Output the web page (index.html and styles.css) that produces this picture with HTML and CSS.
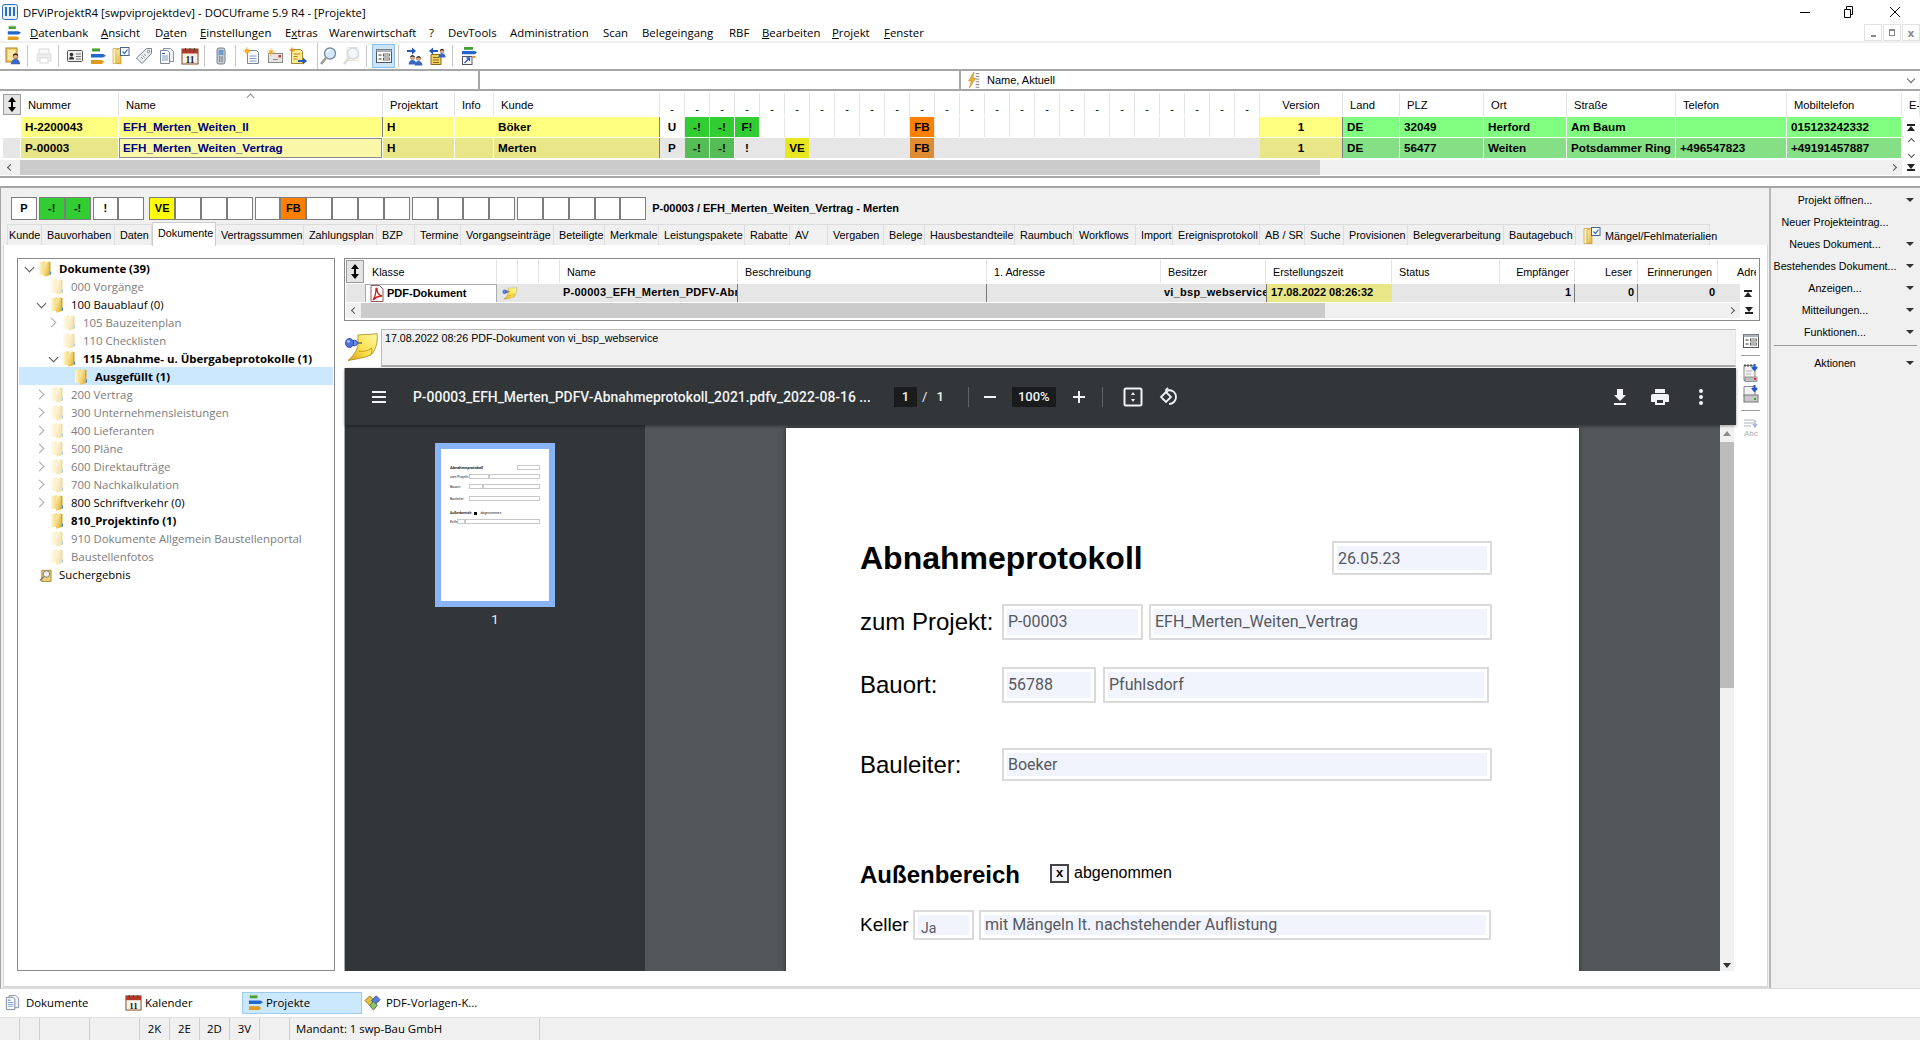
FILE: index.html
```html
<!DOCTYPE html>
<html lang="de">
<head>
<meta charset="utf-8">
<title>DFViProjektR4</title>
<link rel="stylesheet" href="styles.css">
</head>
<body>
<svg class="sprite" xmlns="http://www.w3.org/2000/svg">
  <defs>
    <linearGradient id="gold" x1="0" y1="0" x2="1" y2="1"><stop offset="0" stop-color="#fff4b8"/><stop offset="1" stop-color="#e2ad2c"/></linearGradient>
    <linearGradient id="pale" x1="0" y1="0" x2="1" y2="0"><stop offset="0" stop-color="#fff8d6"/><stop offset="1" stop-color="#f4d56c"/></linearGradient>
    <linearGradient id="sticky" x1="1" y1="0" x2="0" y2="1"><stop offset="0" stop-color="#fff7a6"/><stop offset=".55" stop-color="#fbe04e"/><stop offset="1" stop-color="#d9a21c"/></linearGradient>
    <symbol id="folder" viewBox="0 0 13 17"><path d="M0 2.500 6 1v14H0z" fill="url(#pale)"/><path d="M5 3.500 10 1v14.500L5 16.800z" fill="url(#gold)"/><path d="M10 2h1.500v13H10z" fill="#d8a52c"/><path d="M11 11.500h1v3h-1z" fill="#3b8fd8"/></symbol>
    <symbol id="stack" viewBox="0 0 18 18"><path d="M3 1h8v3.500H3z" fill="#4a9a3a"/><path d="M3 1h8v1H3z" fill="#8fd070"/><path d="M2 7h12l3 1.800-3 1.800H2z" fill="#2266cc"/><path d="M2 13h11l2 1.800-2 2.200H2z" fill="#e09a20"/></symbol>
    <symbol id="doc" viewBox="0 0 18 18"><path d="M5.500 1.500h7l3 3v10h-10z" fill="#eef1f5" stroke="#8a93a0"/><path d="M2.500 3.500h7l2 2v11h-9z" fill="#fbfcfe" stroke="#7d8794"/><path d="M4 6.500h3" stroke="#3a66c0"/><path d="M4 9h6M4 11h6M4 13h6" stroke="#7f9cc8"/></symbol>
    <symbol id="cal" viewBox="0 0 18 18"><rect x="1" y="2" width="16" height="15" fill="#f8f2e4" stroke="#7b4a26"/><rect x="1" y="2" width="16" height="4.500" fill="#b23a2a"/><path d="M4.500 1v3M9 1v3M13.500 1v3" stroke="#444"/><text x="9" y="15.500" text-anchor="middle" font-family="Liberation Serif" font-weight="bold" font-size="9.500" fill="#1a1a1a">11</text></symbol>
    <symbol id="mag" viewBox="0 0 18 20"><circle cx="11" cy="7.500" r="5.500" fill="#d6e8fb" stroke="#7a8da2" stroke-width="1.400"/><path d="M8 6a3.500 3.500 0 0 1 4-2" fill="none" stroke="#fff" stroke-width="1.200"/><path d="M7 12 2 18" stroke="#9a9a8e" stroke-width="2.600"/></symbol>
    <symbol id="person" viewBox="0 0 18 20"><circle cx="9" cy="7.500" r="3.500" fill="#e5b08a" stroke="#4a2e18" stroke-width=".6"/><path d="M2.500 19c0-5 3-7.500 6.500-7.500s6.500 2.500 6.500 7.500z" fill="#3a66c0"/><path d="M5.500 7c-.5-4.500 7.500-4.500 7 0-2-1.500-5-1.500-7 0z" fill="#2e1c0e"/></symbol>
    <symbol id="note" viewBox="0 0 36 32"><path d="M14 5C20 4 28 5 33 3.500 34 12 32 20 27 25 20 28 12 29 4 30.500 9 26 13 21 14 15z" fill="url(#sticky)" stroke="#a8881c" stroke-width=".8"/><path d="M27 25c1-3 1-5 .5-7-3 3-9 4-13 3" fill="none" stroke="#c89a18"/><path d="M13 13h5" stroke="#6a6a6a" stroke-width="1.500"/><ellipse cx="10.500" cy="13" rx="3" ry="2.800" fill="#6f8df0" stroke="#23408f" stroke-width=".8"/><ellipse cx="5.500" cy="13" rx="4" ry="4.500" fill="#4e6fe0" stroke="#23408f" stroke-width=".8"/><ellipse cx="4.500" cy="11.500" rx="1.500" ry="1.300" fill="#b8c8fa"/></symbol>
    <symbol id="pdf" viewBox="0 0 14 17"><path d="M1 .5h8.500L13 4v12.500H1z" fill="#fff" stroke="#8c5b5b"/><path d="M3 15c2-3 3-7 3-11 0-1 1-1 1 0 0 3 2 6 5 7-3 0-6 1-9 4z" fill="none" stroke="#c8201c" stroke-width="1.300"/></symbol>
    <symbol id="listform" viewBox="0 0 18 18"><rect x="1.500" y="2.500" width="15" height="13" fill="#fff" stroke="#555"/><path d="M1.500 2.500h15V5h-15z" fill="#aab2bc"/><path d="M3.500 8h3M3.500 12h3" stroke="#333"/><rect x="8.500" y="7" width="6" height="2" fill="#fff" stroke="#333" stroke-width=".7"/><rect x="8.500" y="11" width="6" height="2" fill="#fff" stroke="#333" stroke-width=".7"/></symbol>
    <symbol id="imp" viewBox="0 0 18 20"><path d="M2 2.500h11v15H2z" fill="#f2f2f2" stroke="#8a8a8a"/><path d="M2 2.500h2M5 2.500h2M8 2.500h2" stroke="#555" stroke-width="2"/><path d="M4 8h6M4 11h5" stroke="#b0b0b0"/><path d="M12.500 1v5M10 4l2.500 3L15 4" fill="none" stroke="#2358c8" stroke-width="2"/><rect x="3" y="14" width="12" height="4.500" fill="#bfbfbf" stroke="#777" stroke-width=".7"/><rect x="12" y="15" width="2" height="2" fill="#d33"/></symbol>
    <symbol id="fchk" viewBox="0 0 18 18"><path d="M1 1.500h6v15H1z" fill="url(#pale)" stroke="#b8912a" stroke-width=".6"/><path d="M4 3l5-2v16l-5-1z" fill="url(#gold)" stroke="#b8912a" stroke-width=".6"/><rect x="8.500" y=".5" width="8.500" height="8" fill="#fff" stroke="#47678f"/><path d="m10.500 4.500 2 2 3-4" fill="none" stroke="#2a6fc0" stroke-width="1.200"/></symbol>
  </defs>
</svg>

<div class="app">
  <header class="titlebar">
    <svg class="appicon" viewBox="0 0 16 16"><rect x=".5" y=".5" width="15" height="15" rx="2" fill="#e8f2fc" stroke="#2a6fc0"/><path d="M4 3v9M8 3v9M12 3v9" stroke="#2a6fc0" stroke-width="2"/></svg>
    <span class="title">DFViProjektR4 [swpviprojektdev] - DOCUframe 5.9 R4 - [Projekte]</span>
    <div class="winctl">
      <svg viewBox="0 0 44 16"><path d="M15 8.500h10" stroke="#000"/></svg>
      <svg viewBox="0 0 44 16"><path d="M15.500 5.500h6v8h-6zM17.500 5.500v-3h6v8h-2" fill="none" stroke="#000"/></svg>
      <svg viewBox="0 0 44 16"><path d="M17 3l10 10M27 3 17 13" stroke="#000"/></svg>
    </div>
  </header>

  <nav class="menubar">
    <svg class="menuicon"><use href="#stack"/></svg>
    <span class="m1"><u>D</u>atenbank</span><span class="m2"><u>A</u>nsicht</span><span class="m3">D<u>a</u>ten</span><span class="m4"><u>E</u>instellungen</span><span class="m5">E<u>x</u>tras</span><span class="m6">Warenwirtschaft</span><span class="m7">?</span><span class="m8">DevTools</span><span class="m9">Administration</span><span class="m10">Scan</span><span class="m11">Belegeingang</span><span class="m12">RBF</span><span class="m13"><u>B</u>earbeiten</span><span class="m14"><u>P</u>rojekt</span><span class="m15"><u>F</u>enster</span>
    <div class="mdictl">
      <i><b class="mdi-min"></b></i><i><b class="mdi-res"></b></i><i class="mdi-x">x</i>
    </div>
  </nav>

  <div class="toolbar">
    <span class="tb"><svg viewBox="0 0 18 20"><rect x="2" y="2" width="11" height="14" fill="#f3cf6a" stroke="#a8842a"/><rect x="4" y="4" width="7" height="10" fill="#fbe9a8"/><use href="#person" x="5" y="5" width="13" height="14"/></svg></span><i class="sep"></i>
    <span class="tb dim"><svg viewBox="0 0 18 18"><rect x="4" y="2" width="10" height="6" fill="#eee" stroke="#999"/><rect x="2" y="7" width="14" height="7" fill="#ccc" stroke="#999"/><rect x="5" y="11" width="8" height="5" fill="#fff" stroke="#999"/></svg></span><i class="sep"></i>
    <span class="tb"><svg viewBox="0 0 18 18"><rect x="1.500" y="3.500" width="15" height="11" rx="1" fill="#eee" stroke="#555"/><circle cx="5.500" cy="7.500" r="1.800" fill="#333"/><path d="M3 12.500c0-2 1-3 2.500-3s2.500 1 2.500 3z" fill="#333"/><path d="M10 7h5M10 9.500h5M10 12h5" stroke="#777"/></svg></span>
    <span class="tb"><svg><use href="#stack"/></svg></span>
    <span class="tb"><svg><use href="#fchk"/></svg></span>
    <span class="tb"><svg viewBox="0 0 18 18"><path d="M11.500 1.500h5v5L7 16.500 1.500 11z" fill="#eceff3" stroke="#78818c"/><circle cx="13.500" cy="4.500" r="1.200" fill="#fff" stroke="#78818c"/><path d="M6 10l2 2M7.500 8.500l2 2M9 7l2 2" stroke="#8a93a0"/></svg></span>
    <span class="tb"><svg><use href="#doc"/></svg></span>
    <span class="tb"><svg><use href="#cal"/></svg></span><i class="sep"></i>
    <span class="tb"><svg viewBox="0 0 18 18"><rect x="5" y="1" width="8" height="16" rx="2" fill="#c6ccd4" stroke="#7a8491"/><rect x="6.500" y="3" width="5" height="5" fill="#6f9ad0"/><path d="M7 10h4M7 12h4M7 14h4" stroke="#555" stroke-dasharray="1 .6"/></svg></span><i class="sep"></i>
    <span class="tb"><svg viewBox="0 0 18 18"><path d="M4.500 3.500h9l2 2v11h-11z" fill="#fafbfd" stroke="#7d8794"/><path d="M6.500 9h7M6.500 11.500h7M6.500 14h7" stroke="#7f9cc8"/><circle cx="4" cy="4" r="2.200" fill="#f0b030"/><path d="M4 0v8M0 4h8M1.500 1.500l5 5M6.500 1.500l-5 5" stroke="#f0b030" stroke-width=".7"/></svg></span>
    <span class="tb"><svg viewBox="0 0 18 18"><rect x="2.500" y="6.500" width="14" height="9" fill="#e6e6de" stroke="#8a8a8a"/><path d="M7 12.500h5" stroke="#888"/><rect x="12.500" y="8" width="2.500" height="2.500" fill="#cc3a2a"/><circle cx="5" cy="5" r="1.800" fill="#f0b030"/><path d="M5 1v8M1 5h8M2.500 2.500l5 5M7.500 2.500l-5 5" stroke="#f0b030" stroke-width=".7"/></svg></span>
    <span class="tb"><svg viewBox="0 0 18 18"><path d="M2.500 2.500h9l2 2v12h-11z" fill="#ffe98c" stroke="#a88a2a"/><path d="M4.500 7h7M4.500 9.500h4M4.500 12h4" stroke="#a88a2a"/><circle cx="3" cy="3" r="1.800" fill="#e89020"/><path d="M3 0v6M0 3h6" stroke="#e89020" stroke-width=".7"/><path d="M9 13h5v-2.500l4 3.500-4 3.500V15H9z" fill="#2358c8"/></svg></span><i class="sep far"></i>
    <span class="tb"><svg><use href="#mag"/></svg></span>
    <span class="tb dim"><svg viewBox="0 0 18 20"><path d="M5 1.500h11v13H5z" fill="#f8f0d8" stroke="#c8b88a"/><use href="#mag" width="18" height="20"/></svg></span><i class="sep near"></i>
    <span class="tb active"><svg><use href="#listform"/></svg></span><i class="sep"></i>
    <span class="tb"><svg viewBox="0 0 18 20"><path d="M1 4h5V1.500L10 5 6 8.500V6H1z" fill="#2358c8"/><use href="#person" x="1" y="7" width="11" height="12"/><use href="#person" x="7" y="8" width="11" height="12"/></svg></span>
    <span class="tb"><svg viewBox="0 0 18 20"><path d="M2 8.500h10v10H2z" fill="#f0d060" stroke="#8a6a1a"/><path d="M4 11.500h6M4 14h6M4 16.500h6" stroke="#8a6a1a"/><path d="M9 4H4V1.500L0 5l4 3.500V6h5z" fill="#2358c8"/><use href="#person" x="8" y="1" width="10" height="11"/></svg></span><i class="sep"></i>
    <span class="tb"><svg viewBox="0 0 18 20"><path d="M4 1h9v2.800H4z" fill="#4a9a3a"/><path d="M2 5h13l2 1.600-2 1.600H2z" fill="#2266cc"/><rect x="2.500" y="10.500" width="9.500" height="8" fill="#fff" stroke="#556"/><path d="M4.500 17l5-5M6.500 12h3v3" fill="none" stroke="#2358c8" stroke-width="1.300"/><path d="M12.500 10h3v2h-3z" fill="#e09a20"/></svg></span>
  </div>

  <div class="filter">
    <div class="f1"></div>
    <div class="f2"></div>
    <div class="f3">
      <svg viewBox="0 0 16 20"><path d="M9 1 3 11h3l-2 8 7-11H8z" fill="#e8b030" stroke="#a87818" stroke-width=".5"/><path d="M11 3h4M11 6h4M11 9h4M11 12h4M11 15h4M11 18h4" stroke="#777"/></svg>
      <span>Name, Aktuell</span>
      <b class="chev-down"></b>
    </div>
  </div>

  <section class="projects">
    <div class="pgrid">
      <div class="pbtn"><b class="updown"></b></div><div class="h">Nummer</div><div class="h sorted">Name</div><div class="h">Projektart</div><div class="h">Info</div><div class="h">Kunde</div>
      <div class="n">-</div><div class="n">-</div><div class="n">-</div><div class="n">-</div><div class="n">-</div><div class="n">-</div><div class="n">-</div><div class="n">-</div><div class="n">-</div><div class="n">-</div><div class="n">-</div><div class="n">-</div><div class="n">-</div><div class="n">-</div><div class="n">-</div><div class="n">-</div><div class="n">-</div><div class="n">-</div><div class="n">-</div><div class="n">-</div><div class="n">-</div><div class="n">-</div><div class="n">-</div><div class="n">-</div>
      <div class="h center">Version</div><div class="h">Land</div><div class="h">PLZ</div><div class="h">Ort</div><div class="h">Straße</div><div class="h">Telefon</div><div class="h">Mobiltelefon</div><div class="h">E-</div>

      <div class="c"></div><div class="c y1">H-2200043</div><div class="c y1 navy vl">EFH_Merten_Weiten_II</div><div class="c y1">H</div><div class="c y1"></div><div class="c y1 vl">Böker</div>
      <div class="s">U</div><div class="s g1">-!</div><div class="s g1">-!</div><div class="s g1">F!</div><div class="s"></div><div class="s"></div><div class="s"></div><div class="s"></div><div class="s"></div><div class="s"></div><div class="s or1">FB</div><div class="s"></div><div class="s"></div><div class="s"></div><div class="s"></div><div class="s"></div><div class="s"></div><div class="s"></div><div class="s"></div><div class="s"></div><div class="s"></div><div class="s"></div><div class="s"></div><div class="s"></div>
      <div class="c y1 center vl">1</div><div class="c lg1">DE</div><div class="c lg1">32049</div><div class="c lg1">Herford</div><div class="c lg1">Am Baum</div><div class="c lg1"></div><div class="c lg1">015123242332</div><div class="c vscroll"><b class="tobar top"></b></div>

      <div class="c gy"></div><div class="c y2">P-00003</div><div class="c y3 navy">EFH_Merten_Weiten_Vertrag</div><div class="c y2">H</div><div class="c y2"></div><div class="c y2 vl">Merten</div>
      <div class="s gy">P</div><div class="s g2">-!</div><div class="s g2">-!</div><div class="s gy">!</div><div class="s gy"></div><div class="s ve2">VE</div><div class="s gy"></div><div class="s gy"></div><div class="s gy"></div><div class="s gy"></div><div class="s or2">FB</div><div class="s gy"></div><div class="s gy"></div><div class="s gy"></div><div class="s gy"></div><div class="s gy"></div><div class="s gy"></div><div class="s gy"></div><div class="s gy"></div><div class="s gy"></div><div class="s gy"></div><div class="s gy"></div><div class="s gy"></div><div class="s gy"></div>
      <div class="c y2 center vl">1</div><div class="c lg2">DE</div><div class="c lg2">56477</div><div class="c lg2">Weiten</div><div class="c lg2">Potsdammer Ring</div><div class="c lg2">+496547823</div><div class="c lg2">+49191457887</div><div class="c vscroll updn"><b class="chev up"></b><b class="chev dn"></b></div>
    </div>
    <div class="hscroll main">
      <b class="chev lf"></b><div class="thumb"></div><b class="chev rt"></b><span class="endcell"><b class="tobar bot"></b></span>
    </div>
  </section>

  <section class="lower">
    <div class="workarea">
      <div class="statusrow">
        <div class="sg"><span>P</span></div>
        <div class="sg"><span class="bg-g">-!</span><span class="bg-g">-!</span></div>
        <div class="sg wide"><span>!</span><span></span></div>
        <div class="sg"><span class="bg-y">VE</span><span></span><span></span><span></span></div>
        <div class="sg"><span></span><span class="bg-o">FB</span><span></span><span></span><span></span><span></span></div>
        <div class="sg"><span></span><span></span><span></span><span></span></div>
        <div class="sg"><span></span><span></span><span></span><span></span><span></span></div>
        <strong>P-00003 / EFH_Merten_Weiten_Vertrag - Merten</strong>
      </div>

      <div class="tabs">
        <span>Kunde</span><span>Bauvorhaben</span><span>Daten</span><span class="on">Dokumente</span><span>Vertragssummen</span><span>Zahlungsplan</span><span>BZP</span><span>Termine</span><span>Vorgangseinträge</span><span>Beteiligte</span><span>Merkmale</span><span>Leistungspakete</span><span>Rabatte</span><span>AV</span><span>Vergaben</span><span>Belege</span><span>Hausbestandteile</span><span>Raumbuch</span><span>Workflows</span><span>Import</span><span>Ereignisprotokoll</span><span>AB / SR</span><span>Suche</span><span>Provisionen</span><span>Belegverarbeitung</span><span>Bautagebuch</span>
        <span class="withicon"><svg><use href="#fchk"/></svg>Mängel/Fehlmaterialien</span>
      </div>

      <div class="content">
        <aside class="tree">
          <div class="row"><b class="tw open"></b><svg class="fd"><use href="#folder"/></svg><span class="bold">Dokumente (39)</span></div>
          <div class="row l1 off"><b class="tw"></b><svg class="fd"><use href="#folder"/></svg><span>000 Vorgänge</span></div>
          <div class="row l1"><b class="tw open"></b><svg class="fd"><use href="#folder"/></svg><span>100 Bauablauf (0)</span></div>
          <div class="row l2 off"><b class="tw closed"></b><svg class="fd"><use href="#folder"/></svg><span>105 Bauzeitenplan</span></div>
          <div class="row l2 off"><b class="tw"></b><svg class="fd"><use href="#folder"/></svg><span>110 Checklisten</span></div>
          <div class="row l2"><b class="tw open"></b><svg class="fd"><use href="#folder"/></svg><span class="bold">115 Abnahme- u. Übergabeprotokolle (1)</span></div>
          <div class="row l3 sel"><b class="tw"></b><svg class="fd"><use href="#folder"/></svg><span class="bold">Ausgefüllt (1)</span></div>
          <div class="row l1 off"><b class="tw closed"></b><svg class="fd"><use href="#folder"/></svg><span>200 Vertrag</span></div>
          <div class="row l1 off"><b class="tw closed"></b><svg class="fd"><use href="#folder"/></svg><span>300 Unternehmensleistungen</span></div>
          <div class="row l1 off"><b class="tw closed"></b><svg class="fd"><use href="#folder"/></svg><span>400 Lieferanten</span></div>
          <div class="row l1 off"><b class="tw closed"></b><svg class="fd"><use href="#folder"/></svg><span>500 Pläne</span></div>
          <div class="row l1 off"><b class="tw closed"></b><svg class="fd"><use href="#folder"/></svg><span>600 Direktaufträge</span></div>
          <div class="row l1 off"><b class="tw closed"></b><svg class="fd"><use href="#folder"/></svg><span>700 Nachkalkulation</span></div>
          <div class="row l1"><b class="tw closed"></b><svg class="fd"><use href="#folder"/></svg><span>800 Schriftverkehr (0)</span></div>
          <div class="row l1"><b class="tw"></b><svg class="fd"><use href="#folder"/></svg><span class="bold">810_Projektinfo (1)</span></div>
          <div class="row l1 off"><b class="tw"></b><svg class="fd"><use href="#folder"/></svg><span>910 Dokumente Allgemein Baustellenportal</span></div>
          <div class="row l1 off"><b class="tw"></b><svg class="fd"><use href="#folder"/></svg><span>Baustellenfotos</span></div>
          <div class="row"><b class="tw"></b><svg class="fd search" viewBox="0 0 14 17"><path d="M3 4h10v12H3z" fill="#f0d078" stroke="#a88a2a"/><circle cx="8" cy="8" r="3.500" fill="#e8f0f8" stroke="#777"/><path d="M5 11 1 15" stroke="#777" stroke-width="1.500"/></svg><span>Suchergebnis</span></div>
        </aside>

        <div class="rightcol">
          <div class="doctable">
            <div class="dgrid">
              <div class="pbtn"><b class="updown"></b></div><div class="dh">Klasse</div><div class="dh"></div><div class="dh"></div><div class="dh"></div><div class="dh">Name</div><div class="dh">Beschreibung</div><div class="dh">1. Adresse</div><div class="dh">Besitzer</div><div class="dh">Erstellungszeit</div><div class="dh">Status</div><div class="dh right">Empfänger</div><div class="dh right">Leser</div><div class="dh right">Erinnerungen</div><div class="dh adre">Adre</div>
              <div class="d"></div><div class="d klasse"><svg class="pdficon"><use href="#pdf"/></svg>PDF-Dokument</div><div class="d"><svg class="pinmini"><use href="#note"/></svg></div><div class="d"></div><div class="d"></div><div class="d sepd clip">P-00003_EFH_Merten_PDFV-Abnahmeprotokoll</div><div class="d sepd"></div><div class="d"></div><div class="d clip">vi_bsp_webservice</div><div class="d ydate">17.08.2022 08:26:32</div><div class="d"></div><div class="d right sepd">1</div><div class="d right sepd">0</div><div class="d right">0</div><div class="d"></div><div class="d endw"><b class="tobar top"></b></div>
            </div>
            <div class="hscroll doc"><b class="chev lf"></b><div class="thumb"></div><b class="chev rt"></b><span class="endcell"><b class="tobar bot"></b></span></div>
          </div>

          <div class="docbody">
            <div class="docmain">
              <div class="noterow">
                <svg class="bignote"><use href="#note"/></svg>
                <div class="notebox">17.08.2022 08:26 PDF-Dokument von vi_bsp_webservice</div>
              </div>

              <div class="viewer">
                <div class="vbar">
                  <svg class="vi ham" viewBox="0 0 20 20"><path d="M3 5h14M3 10h14M3 15h14" stroke="#f1f3f4" stroke-width="2"/></svg>
                  <span class="vtitle">P-00003_EFH_Merten_PDFV-Abnahmeprotokoll_2021.pdfv_2022-08-16 ...</span>
                  <span class="pagebox">1</span><span class="slash">/</span><span class="pagetotal">1</span>
                  <i class="vsep first"></i>
                  <svg class="vi minus" viewBox="0 0 20 20"><path d="M4 10h12" stroke="#f1f3f4" stroke-width="2"/></svg>
                  <span class="zoombox">100%</span>
                  <svg class="vi plus" viewBox="0 0 20 20"><path d="M4 10h12M10 4v12" stroke="#f1f3f4" stroke-width="2"/></svg>
                  <i class="vsep second"></i>
                  <svg class="vi fit" viewBox="0 0 20 20"><rect x="1.500" y="1.500" width="17" height="17" rx="1.500" fill="none" stroke="#f1f3f4" stroke-width="2"/><path d="M10 5l2 3H8zM10 15l2-3H8z" fill="#f1f3f4"/></svg>
                  <svg class="vi rot" viewBox="0 0 20 20"><path d="M8 5 3 10l5 5 5-5z" fill="none" stroke="#f1f3f4" stroke-width="1.800"/><path d="M10 1l-2 2 2 2M10 3c5 0 8 3 8 7s-3 7-7 7" fill="none" stroke="#f1f3f4" stroke-width="1.800"/></svg>
                  <svg class="vi dl" viewBox="0 0 20 20"><path d="M7 2h6v6h3l-6 6-6-6h3zM4 16h12v2H4z" fill="#f1f3f4"/></svg>
                  <svg class="vi pr" viewBox="0 0 20 20"><path d="M5 2h10v4H5zM3 7h14a2 2 0 0 1 2 2v6h-4v3H5v-3H1V9a2 2 0 0 1 2-2zm4 6v3h6v-3z" fill="#f1f3f4"/></svg>
                  <svg class="vi more" viewBox="0 0 20 20"><circle cx="10" cy="4" r="2" fill="#f1f3f4"/><circle cx="10" cy="10" r="2" fill="#f1f3f4"/><circle cx="10" cy="16" r="2" fill="#f1f3f4"/></svg>
                </div>
                <div class="vbody">
                  <div class="thumbs">
                    <div class="thumbpage">
                      <div class="tp">
                        <div class="tp-h"><b>Abnahmeprotokoll</b><i></i></div>
                        <div class="tp-r"><em>zum Projekt:</em><i class="w-a"></i><i></i></div>
                        <div class="tp-r gap-b"><em>Bauort:</em><i class="w-b"></i><i></i></div>
                        <div class="tp-r gap-c"><em>Bauleiter:</em><i></i></div>
                        <div class="tp-a"><b>Außenbereich</b><u></u><em>abgenommen</em></div>
                        <div class="tp-r kel"><em>Keller</em><i class="w-c"></i><i></i></div>
                      </div>
                    </div>
                    <div class="thumbnum">1</div>
                  </div>
                  <div class="pagearea">
                    <div class="page">
                      <div class="p-row p-head"><h1>Abnahmeprotokoll</h1><div class="field date"><span>26.05.23</span></div></div>
                      <div class="p-row p-proj"><label>zum Projekt:</label><div class="field w141"><span>P-00003</span></div><div class="field grow"><span>EFH_Merten_Weiten_Vertrag</span></div></div>
                      <div class="p-row p-ort"><label>Bauort:</label><div class="field w94"><span>56788</span></div><div class="field grow"><span>Pfuhlsdorf</span></div></div>
                      <div class="p-row p-bl"><label>Bauleiter:</label><div class="field grow"><span>Boeker</span></div></div>
                      <div class="p-row p-aus"><h2>Außenbereich</h2><b class="check">x</b><span class="abg">abgenommen</span></div>
                      <div class="p-row p-kel"><label>Keller</label><div class="field w61"><span class="ja">Ja</span></div><div class="field grow"><span>mit Mängeln lt. nachstehender Auflistung</span></div></div>
                    </div>
                  </div>
                  <div class="vscrollbar"><b class="ar up"></b><div class="vthumb"></div><b class="ar dn"></b></div>
                </div>
              </div>
            </div>
            <div class="sidetools">
              <svg class="st"><use href="#listform"/></svg>
              <i class="stsep"></i>
              <svg class="st"><use href="#imp"/></svg>
              <svg class="st s2nd" viewBox="0 0 18 20"><path d="M2 2.500h11v10H2z" fill="#f2f2f2" stroke="#8a8a8a"/><path d="M12.500 1v5M10 4l2.500 3L15 4" fill="none" stroke="#2358c8" stroke-width="2"/><rect x="2" y="11" width="14" height="7" fill="#c8c8c8" stroke="#777"/><rect x="12" y="14" width="2" height="2" fill="#3a3"/></svg>
              <i class="stsep low"></i>
              <svg class="st faded" viewBox="0 0 18 20"><path d="M2 2h10M2 5h10M2 8h7" stroke="#9aa4b4"/><path d="M13 2v6M11 6l2 3 2-3" fill="none" stroke="#8fa8e0" stroke-width="1.500"/><text x="2" y="18" font-size="8" font-family="Liberation Sans" fill="#9a9a9a">Abc</text></svg>
            </div>
          </div>
        </div>
      </div>
    </div>

    <aside class="actions">
      <div class="act"><span>Projekt öffnen...</span><b></b></div>
      <div class="act"><span>Neuer Projekteintrag...</span></div>
      <div class="act"><span>Neues Dokument...</span><b></b></div>
      <div class="act"><span>Bestehendes Dokument...</span><b></b></div>
      <div class="act"><span>Anzeigen...</span><b></b></div>
      <div class="act"><span>Mitteilungen...</span><b></b></div>
      <div class="act"><span>Funktionen...</span><b></b></div>
      <hr>
      <div class="act"><span>Aktionen</span><b></b></div>
    </aside>
  </section>

  <div class="wintabs">
    <span class="wt w1"><svg><use href="#doc"/></svg>Dokumente</span>
    <span class="wt w2"><svg><use href="#cal"/></svg>Kalender</span>
    <span class="wt w3 on"><svg><use href="#stack"/></svg>Projekte</span>
    <span class="wt w4"><svg viewBox="0 0 18 18"><path d="M1 7l5-5 5 5-5 5z" fill="#e0c040" stroke="#987818"/><path d="M8 7l5-5 4 4-5 5z" fill="#5a7ee0" stroke="#2a4698"/><path d="M6 12l4-4 4 4-4 5z" fill="#8fc070" stroke="#4a7a38"/></svg>PDF-Vorlagen-K...</span>
  </div>

  <footer class="statusbar">
    <span class="sb sb1"></span><span class="sb sb2"></span><span class="sb sb3"></span><span class="sb sb4"></span>
    <span class="sb sbk">2K</span><span class="sb sbk">2E</span><span class="sb sbk">2D</span><span class="sb sbk">3V</span><span class="sb sbk"></span>
    <span class="sb man">Mandant: 1 swp-Bau GmbH</span>
  </footer>
</div>
</body>
</html>
```

FILE: styles.css
```css
* { box-sizing: border-box; }
html, body { margin: 0; padding: 0; }
body { width: 1920px; height: 1040px; overflow: hidden; background: #fff; font-family: "Liberation Sans", Arial, sans-serif; font-size: 11px; color: #000; }
.sprite { display: block; width: 0; height: 0; }
svg { display: block; }
.app { width: 1920px; height: 1040px; display: flex; flex-direction: column; overflow: hidden; }

/* title bar */
.titlebar { height: 24px; display: flex; align-items: center; padding-left: 2px; font-family: "Open Sans", sans-serif; font-size: 11.4px; flex: none; }
.appicon { width: 16px; height: 16px; margin-right: 5px; }
.winctl { margin-left: auto; display: flex; margin-right: 3px; }
.winctl svg { width: 44px; height: 16px; }

/* menu */
.menubar { height: 17px; display: flex; align-items: center; font-family: "Open Sans", sans-serif; font-size: 11.4px; flex: none; position: relative; }
.menubar span { flex: none; white-space: nowrap; }
.menubar u { text-decoration-thickness: 1px; text-underline-offset: 1px; }
.menuicon { width: 16px; height: 16px; margin-left: 6px; margin-right: 8px; flex: none; }
.m1 { width: 71px; } .m2 { width: 54px; } .m3 { width: 45px; } .m4 { width: 85px; } .m5 { width: 44px; } .m6 { width: 100px; } .m7 { width: 19px; } .m8 { width: 62px; } .m9 { width: 93px; } .m10 { width: 39px; } .m11 { width: 87px; } .m12 { width: 33px; } .m13 { width: 70px; } .m14 { width: 52px; }
.mdictl { margin-left: auto; display: flex; gap: 1px; }
.mdictl i { width: 18px; height: 17px; border: 1px solid #e2e2e2; display: flex; align-items: center; justify-content: center; font-style: normal; font-weight: bold; color: #888; font-size: 11px; }
.mdi-min { width: 5px; height: 2px; background: #888; margin-top: 7px; }
.mdi-res { width: 6px; height: 7px; border: 1px solid #888; border-top-width: 2px; }

/* toolbar */
.toolbar { height: 28px; border-top: 2px solid #f0f0f0; padding-left: 1px; display: flex; align-items: center; flex: none; }
.tb { width: 23px; height: 24px; display: flex; align-items: center; justify-content: center; flex: none; }
.tb svg { width: 18px; height: 20px; }
.tb.dim { opacity: .35; }
.tb.active { background: #cce4f7; border: 1px solid #8fbfe6; margin-left: 1px; }
.sep { width: 1px; height: 22px; background: #c6c6c6; margin: 0 4px 0 3px; flex: none; }
.sep.far { height: 26px; margin: 0 -2px 0 8px; }
.sep.near { margin: 0 4px 0 4px; }

/* filter */
.filter { height: 22px; border-top: 2px solid #a6a6a6; border-bottom: 2px solid #a6a6a6; display: flex; flex: none; }
.f1 { width: 480px; border-right: 2px solid #a6a6a6; }
.f2 { width: 481px; border-right: 2px solid #a6a6a6; }
.f3 { flex: 1; display: flex; align-items: center; padding-left: 4px; position: relative; }
.f3 svg { width: 16px; height: 18px; margin-right: 6px; }
.chev-down { width: 6px; height: 6px; border-right: 1px solid #666; border-bottom: 1px solid #666; transform: rotate(45deg); margin-left: auto; margin-right: 6px; margin-top: -3px; }

/* project grid */
.projects { height: 87px; flex: none; padding-top: 2px; border-bottom: 2px solid #a6a6a6; }
.pgrid { display: grid; margin-left: 3px; grid-template-columns: 18px 98px 264px 72px 39px 166px repeat(24, 25px) 83px 57px 84px 83px 109px 111px 115px 18px; grid-template-rows: 23px 20px 20px; row-gap: 1px; }
.pbtn { background: #e4e4e4; border: 1px solid #9a9a9a; height: 21px; display: flex; align-items: center; justify-content: center; align-self: start; margin-top: 1px; }
.updown { width: 2px; height: 13px; background: #000; position: relative; }
.updown::before, .updown::after { content: ""; position: absolute; left: -3px; border-left: 4px solid transparent; border-right: 4px solid transparent; }
.updown::before { top: -1px; border-bottom: 5px solid #000; }
.updown::after { bottom: -1px; border-top: 5px solid #000; }
.h { padding-left: 7px; line-height: 24px; font-size: 11.2px; border-right: 1px solid #e4e4e4; white-space: nowrap; overflow: hidden; position: relative; }
.h.center { text-align: center; padding-left: 0; }
.sorted { overflow: visible; }
.sorted::before { content: ""; position: absolute; left: 128px; top: 1px; width: 6px; height: 6px; border-left: 1px solid #666; border-top: 1px solid #666; transform: rotate(45deg) scale(.8); }
.n { text-align: center; line-height: 32px; height: 23px; border-right: 1px solid #e4e4e4; font-size: 11px; overflow: hidden; }
.c { line-height: 20px; padding-left: 4px; font-weight: bold; font-size: 11.7px; white-space: nowrap; overflow: hidden; border-right: 1px solid #fff; }
.s { text-align: center; line-height: 20px; font-weight: bold; font-size: 11.7px; border-right: 1px solid #e6e6e6; }
.y1 { background: #ffff80; }
.y2 { background: #e8e686; }
.y3 { background: #f8f8a8; box-shadow: inset 0 0 0 1px #8c8c8c; }
.navy { color: #000080; }
.vl { border-right: 1px solid #7c7c94; }
.gy { background: #e6e6e6; }
.g1 { background: #32cd32; border-right-color: #fff; }
.g2 { background: #56bc56; border-right-color: #fff; }
.or1 { background: #ff8000; }
.or2 { background: #e08a32; }
.ve2 { background: #e8e620; }
.lg1 { background: #80ff80; }
.lg2 { background: #85e085; }
.center { text-align: center; padding-left: 0; }
.vscroll { background: #fff; display: flex; flex-direction: column; align-items: center; justify-content: center; padding: 0; overflow: visible; border: 0; }
.updn { gap: 8px; }
.tobar { display: block; width: 0; height: 0; position: relative; border-left: 4px solid transparent; border-right: 4px solid transparent; flex: none; }
.tobar.top { border-bottom: 5px solid #222; margin-top: 2px; }
.tobar.top::before { content: ""; position: absolute; left: -4px; top: -2px; width: 8px; height: 2px; background: #222; }
.tobar.bot { border-top: 5px solid #222; margin-bottom: 2px; }
.tobar.bot::after { content: ""; position: absolute; left: -4px; top: 0; width: 8px; height: 2px; background: #222; }
.chev { display: block; width: 5px; height: 5px; border-left: 1px solid #555; border-top: 1px solid #555; flex: none; }
.chev.up { transform: rotate(45deg); }
.chev.dn { transform: rotate(225deg); }
.chev.lf { transform: rotate(-45deg); }
.chev.rt { transform: rotate(135deg); }
.hscroll { display: flex; align-items: center; background: #f0f0f0; }
.hscroll.main { height: 15px; margin-top: 2px; padding-left: 8px; }
.hscroll.main .thumb { width: 1300px; margin-left: 7px; height: 15px; background: #cbcbcb; flex: none; }
.hscroll.main .chev.rt { margin-left: auto; margin-right: 6px; }
.endcell { width: 18px; height: 15px; display: flex; align-items: center; justify-content: center; background: #fff; flex: none; }

/* lower */
.lower { flex: 1; margin-top: 8px; border-top: 2px solid #a6a6a6; background: #f0f0f0; display: flex; min-height: 0; border-left: 1px solid #a6a6a6; border-bottom: 1px solid #ddd; }
.workarea { width: 1767px; display: flex; flex-direction: column; flex: none; }
.statusrow { height: 23px; margin-top: 9px; margin-left: 10px; display: flex; gap: 2px; align-items: stretch; flex: none; }
.sg { display: flex; }
.sg.wide { margin-right: 3px; }
.sg span { width: 25.85px; border: 1px solid #7d7d7d; background: #fff; text-align: center; line-height: 21px; font-weight: bold; font-size: 11px; }
.bg-g { background: #32cd32 !important; }
.bg-y { background: #ffff00 !important; }
.bg-o { background: #ff8000 !important; }
.statusrow strong { margin-left: 4px; line-height: 23px; font-size: 11px; white-space: nowrap; }

.tabs { display: grid; grid-template-columns: 35px 73px 37px 64px 88px 73px 38px 46px 93px 51px 54px 86px 45px 38px 56px 41px 90px 59px 62px 37px 87px 45px 39px 64px 96px 72px 134px; margin-left: 6px; height: 21px; margin-top: 4px; flex: none; }
.tabs span { border: 1px solid #dcdcdc; border-bottom: 0; border-left: 0; padding-left: 5px; line-height: 20px; font-size: 10.8px; white-space: nowrap; background: #f0f0f0; }
.tabs span:first-child { border-left: 1px solid #dcdcdc; padding-left: 1px; }
.tabs .on { background: #fff; height: 24px; margin-top: -2px; line-height: 20px; position: relative; z-index: 1; border-left: 1px solid #ccc; border-right: 1px solid #ccc; border-top: 1px solid #ccc; }
.tabs .withicon { display: flex; align-items: center; gap: 4px; padding-left: 7px; }
.withicon svg { width: 18px; height: 18px; flex: none; }

.content { flex: 1; background: #fff; margin-left: 2px; border: 1px solid #d8d8d8; border-top: 0; border-bottom-width: 2px; padding: 13px 6px 15px 13px; display: flex; gap: 9px; min-height: 0; }

/* tree */
.tree { width: 318px; flex: none; border: 1px solid #888; padding: 0 1px; font-family: "Open Sans", sans-serif; font-size: 11.4px; }
.row { height: 18px; display: flex; align-items: center; padding-left: 4px; white-space: nowrap; }
.row.l1 { padding-left: 16px; } .row.l2 { padding-left: 28px; } .row.l3 { padding-left: 40px; }
.row.sel { background: #cce8ff; }
.row.off span { color: #7c7c7c; }
.row.off .fd { opacity: .42; }
.tw { width: 12px; height: 12px; flex: none; position: relative; display: block; }
.tw.open::before, .tw.closed::before { content: ""; position: absolute; left: 3px; top: 2px; width: 6px; height: 6px; border-right: 1.5px solid #555; border-bottom: 1.5px solid #555; transform: rotate(45deg); }
.tw.closed::before { transform: rotate(-45deg); border-color: #a8a8a8; left: 1px; top: 3px; }
.fd { width: 13px; height: 17px; margin-left: 4px; margin-right: 7px; flex: none; }
.bold { font-weight: 700; }

.rightcol { flex: 1; display: flex; flex-direction: column; min-width: 0; }

/* document table */
.doctable { height: 63px; flex: none; width: 1416px; border: 1px solid #888; padding: 1px; overflow: hidden; }
.dgrid { display: grid; grid-template-columns: 19px 132px 21px 21px 21px 178px 249px 174px 105px 126px 108px 75px 63px 80px 22px 16px; grid-template-rows: 23px 18px; row-gap: 1px; }
.dgrid .pbtn { width: 18px; height: 23px; margin: 0; }
.dh { line-height: 24px; padding-left: 7px; font-size: 10.8px; border-right: 1px solid #e4e4e4; white-space: nowrap; overflow: hidden; }
.dh.right { text-align: right; padding: 0 5px 0 0; }
.dh.adre { grid-column: span 2; padding-left: 19px; border: 0; }
.d { background: #e6e6e6; line-height: 17px; font-weight: bold; font-size: 11px; padding: 0 3px; white-space: nowrap; overflow: hidden; }
.d.right { text-align: right; }
.sepd { border-right: 1px solid #777; }
.klasse { background: #fff; border: 1px solid #aaa; border-bottom: 0; display: flex; align-items: center; gap: 3px; padding-left: 4px; }
.pdficon { width: 14px; height: 17px; flex: none; }
.pinmini { width: 16px; height: 14px; margin: 2px 0 0 2px; }
.clip { letter-spacing: .25px; }
.ydate { background: #e8e686; padding-left: 4px; border-left: 1px solid #777; }
.endw { background: #fff; display: flex; align-items: center; justify-content: center; padding: 0; }
.hscroll.doc { height: 15px; margin-top: 1px; padding-left: 6px; }
.hscroll.doc .thumb { width: 964px; height: 15px; margin-left: 4px; background: #cbcbcb; flex: none; }
.hscroll.doc .chev.rt { margin-left: auto; margin-right: 6px; }

.docbody { flex: 1; display: flex; margin-top: 8px; min-height: 0; }
.docmain { width: 1392px; flex: none; display: flex; flex-direction: column; min-height: 0; }
.noterow { height: 38px; display: flex; flex: none; }
.bignote { width: 36px; height: 32px; margin-top: 1px; margin-right: 1px; flex: none; }
.notebox { flex: 1; border: 1px solid #bbb; border-right-color: #e4e4e4; border-bottom: 2px solid #aaa; background: #f0f0f0; padding: 2px 3px; font-size: 10.7px; }

/* viewer */
.viewer { flex: 1; display: flex; flex-direction: column; border-left: 1px solid #aaa; background: #fff; min-height: 0; margin-top: 1px; }
.vbar { height: 57px; background: #323639; color: #f1f3f4; display: flex; align-items: center; font-family: Roboto, sans-serif; flex: none; box-shadow: 0 1px 3px rgba(0,0,0,.4); position: relative; z-index: 2; }
.vi { width: 20px; height: 20px; flex: none; }
.ham { margin-left: 24px; }
.vtitle { margin-left: 24px; width: 457px; font-size: 13.9px; font-weight: 500; white-space: nowrap; overflow: hidden; flex: none; }
.pagebox { margin-left: 24px; width: 23px; height: 20px; line-height: 20px; text-align: center; background: #191b1c; font-size: 13px; font-weight: 500; flex: none; }
.slash { margin-left: 5px; font-size: 13px; }
.pagetotal { margin-left: 9px; font-size: 13px; font-weight: 500; }
.vsep { width: 1px; height: 20px; background: #5f6368; flex: none; }
.vsep.first { margin-left: 24px; }
.minus { margin-left: 11px; }
.zoombox { margin-left: 12px; width: 44px; height: 20px; line-height: 20px; text-align: center; background: #191b1c; font-size: 13px; font-weight: 500; flex: none; }
.plus { margin-left: 13px; }
.vsep.second { margin-left: 13px; }
.fit { margin-left: 20px; }
.rot { margin-left: 15px; }
.dl { margin-left: auto; }
.pr { margin-left: 20px; }
.more { margin-left: 21px; margin-right: 25px; }
.vbody { flex: 1; display: flex; min-height: 0; }
.thumbs { width: 300px; background: #323639; flex: none; padding-top: 18px; color: #f1f3f4; font-family: Roboto, sans-serif; font-size: 13px; }
.thumbpage { width: 120px; height: 164px; margin-left: 90px; border: 6px solid #8ab4f8; background: #fff; overflow: hidden; }
.tp { padding: 16px 9px 0 9px; font-size: 3.4px; color: #222; }
.tp i { display: block; border: 1px solid #c8c8c8; height: 5px; flex: 1; }
.tp em { font-style: normal; width: 19px; flex: none; white-space: nowrap; }
.tp-h { display: flex; align-items: center; justify-content: space-between; font-size: 4px; }
.tp-h i { flex: 0 0 23px; }
.tp-r { display: flex; align-items: center; margin-top: 4px; }
.tp-r.gap-b { margin-top: 5px; }
.tp-r.gap-c { margin-top: 7px; }
.tp-r .w-a { flex: 0 0 20px; }
.tp-r .w-b { flex: 0 0 14px; }
.tp-r .w-c { flex: 0 0 8px; }
.tp-r.kel em { width: 7px; }
.tp-a { display: flex; align-items: center; margin-top: 10px; gap: 3px; }
.tp-a u { width: 3px; height: 3px; background: #000; }
.thumbnum { width: 120px; margin-left: 90px; text-align: center; margin-top: 5px; }
.pagearea { flex: 1; background: #525659; overflow: hidden; min-width: 0; }
.page { width: 793px; height: 700px; background: #fff; margin: 3px auto 0; padding: 113px 87px 0 74px; box-shadow: 0 0 4px rgba(0,0,0,.5); }
.p-row { display: flex; align-items: center; font-size: 24px; }
.p-row label { width: 142px; flex: none; }
.p-head { height: 34px; justify-content: space-between; }
h1 { margin: 0; font-size: 32px; font-weight: bold; line-height: 34px; }
h2 { margin: 0; font-size: 24px; font-weight: bold; }
.field { border: 2px solid #dadada; padding: 3px; background: #fff; height: 100%; flex: none; }
.field span { display: block; height: 100%; background: #f1f4fd; padding-left: 1px; color: #55585e; font-family: Roboto, sans-serif; font-size: 16px; line-height: 26px; white-space: nowrap; }
.field.grow { flex: 1; }
.date { width: 160px; }
.w141 { width: 141px; margin-right: 6px; }
.w94 { width: 94px; margin-right: 7px; }
.w61 { width: 61px; margin-right: 5px; }
.p-proj { height: 36px; margin-top: 29px; }
.p-ort { height: 36px; margin-top: 27px; padding-right: 3px; }
.p-bl { height: 33px; margin-top: 45px; }
.p-bl .field span { line-height: 23px; }
.p-aus { height: 26px; margin-top: 81px; }
.check { width: 19px; height: 19px; border: 2px solid #444; background: #f4f4f8; font-family: "Liberation Sans", sans-serif; font-size: 13px; line-height: 13px; text-align: center; margin-left: 30px; margin-top: -4px; flex: none; }
.abg { font-size: 16px; margin-left: 5px; margin-top: -4px; }
.p-kel { height: 30px; margin-top: 22px; padding-right: 1px; font-size: 19px; }
.p-kel label { width: 53px; }
.p-kel .field span { line-height: 20px; }
.ja { padding-left: 3px !important; padding-top: 3px; font-size: 14px !important; }
.vscrollbar { width: 16px; background: #f1f1f1; border-right: 2px solid #fff; display: flex; flex-direction: column; align-items: center; flex: none; }
.ar { width: 0; height: 0; border-left: 4px solid transparent; border-right: 4px solid transparent; flex: none; }
.ar.up { border-bottom: 5px solid #8c8c8c; margin: 6px 0; }
.ar.dn { border-top: 5px solid #333; margin: 275px 0 0; }
.vthumb { width: 14px; height: 246px; background: #bcbcbc; flex: none; }

.sidetools { width: 29px; flex: none; display: flex; flex-direction: column; align-items: center; }
.st { width: 18px; height: 20px; flex: none; margin-top: 2px; }
.st.s2nd { margin-top: 1px; }
.stsep { width: 19px; height: 1px; background: #9a9a9a; margin: 4px 0 5px; flex: none; }
.stsep.low { margin: 6px 0 5px; }
.st.faded { opacity: .8; }

/* actions */
.actions { width: 151px; margin-left: 1px; flex: none; border-left: 2px solid #b8b8b8; padding-top: 1px; background: #f0f0f0; font-size: 10.7px; }
.act { height: 22px; display: flex; align-items: center; }
.act span { width: 128px; text-align: center; white-space: nowrap; flex: none; }
.act b { width: 0; height: 0; border-left: 4px solid transparent; border-right: 4px solid transparent; border-top: 4px solid #333; margin-left: 7px; }
.actions hr { height: 1px; border: 0; background: #999; margin: 2px 3px 6px; }

/* window tabs and status */
.wintabs { height: 28px; display: flex; align-items: center; font-family: "Open Sans", sans-serif; font-size: 11.4px; flex: none; background: #fff; padding-bottom: 1px; }
.wt { display: flex; align-items: center; height: 22px; white-space: nowrap; flex: none; }
.wt svg { width: 17px; height: 17px; margin-right: 5px; flex: none; }
.w1 { width: 121px; padding-left: 4px; }
.w2 { width: 121px; padding-left: 4px; }
.w2 svg { margin-right: 3px; }
.w3 { width: 120px; padding-left: 4px; }
.w3 svg { margin-right: 2px; }
.w3.on { background: #cce8ff; border: 1px solid #9ccbee; }
.w4 { margin-left: 2px; }
.statusbar { height: 23px; background: #f0f0f0; display: flex; border-top: 1px solid #e2e2e2; font-family: "Open Sans", sans-serif; font-size: 11.4px; flex: none; }
.sb { height: 100%; border-right: 1px solid #cfcfcf; line-height: 22px; flex: none; text-align: center; }
.sb1 { width: 20px; } .sb2 { width: 20px; } .sb3 { width: 50px; } .sb4 { width: 50px; }
.sbk { width: 30px; }
.man { width: 250px; padding-left: 6px; text-align: left; }
```
